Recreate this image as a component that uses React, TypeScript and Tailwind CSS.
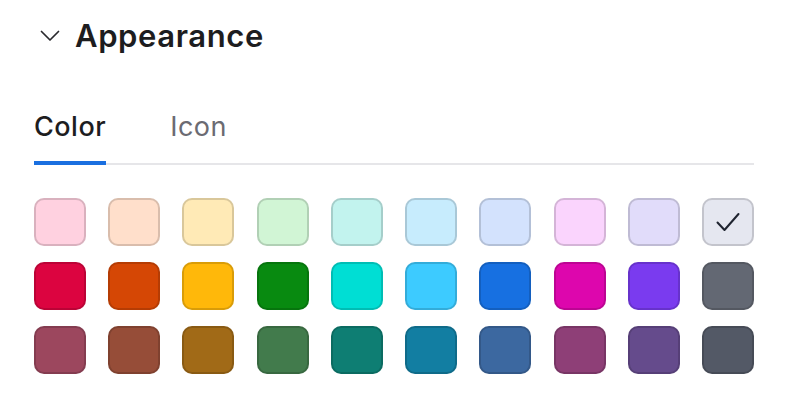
const rows: string[][] = [
  ["#FFD1E0", "#FFDFCB", "#FFEAB6", "#D1F5D5", "#C2F3EE", "#C7ECFD", "#D3E2FD", "#FAD4FD", "#E1DCFA", "#E5E7F0"],
  ["#DC0440", "#D54705", "#FFB80A", "#088A10", "#00DED4", "#3DCBFF", "#1770E1", "#DD06AD", "#7A3BEF", "#636873"],
  ["#9C475E", "#964D38", "#A16A17", "#427B4C", "#0E7E73", "#127EA2", "#3C68A0", "#8E3F77", "#654B8C", "#535966"],
];

const selected = "#E5E7F0";

function Swatch({ color }: { color: string }) {
  return (
    <button
      type="button"
      style={{ backgroundColor: color }}
      className="w-[52px] h-[48px] rounded-[10px] border-2 border-black/15 flex items-center justify-center"
    >
      {color === selected && (
        <svg width="24" height="20" viewBox="0 0 24 20" fill="none">
          <polyline
            points="1.5,10.5 8.5,18 22.5,2"
            stroke="#1f2430"
            strokeWidth="2"
            strokeLinecap="round"
            strokeLinejoin="round"
          />
        </svg>
      )}
    </button>
  );
}

export default function App() {
  return (
    <div className="w-[786px] h-[416px] bg-white px-[34px] pt-[18px] font-['Inter',sans-serif]">
      <div className="flex items-center h-[36px]">
        <svg width="20" height="12" viewBox="0 0 20 12" fill="none" className="ml-[6px]">
          <polyline
            points="1.5,1.5 10,10 18.5,1.5"
            stroke="#2a2a2e"
            strokeWidth="1.7"
            strokeLinecap="round"
            strokeLinejoin="round"
          />
        </svg>
        <h2 className="ml-[15px] text-[31px] leading-[36px] font-semibold text-[#1d1d1f] tracking-[0.6px]">
          Appearance
        </h2>
      </div>

      <div className="mt-[57px] flex gap-16 border-b-2 border-[#e6e6e9] w-[720px]">
        <button
          type="button"
          className="-mb-[2px] pb-[18px] border-b-4 border-[#1a6fe0] text-[27px] leading-[32px] font-medium text-[#1d1d1f] tracking-[0.5px]"
        >
          Color
        </button>
        <button
          type="button"
          className="-mb-[2px] pb-[18px] border-b-4 border-transparent text-[27px] leading-[32px] font-normal text-[#6b6b72] tracking-[0.5px]"
        >
          Icon
        </button>
      </div>

      <div className="mt-[33px] w-[720px] flex flex-col gap-4">
        {rows.map((row, i) => (
          <div key={i} className="flex justify-between">
            {row.map((c) => (
              <Swatch key={c} color={c} />
            ))}
          </div>
        ))}
      </div>
    </div>
  );
}
